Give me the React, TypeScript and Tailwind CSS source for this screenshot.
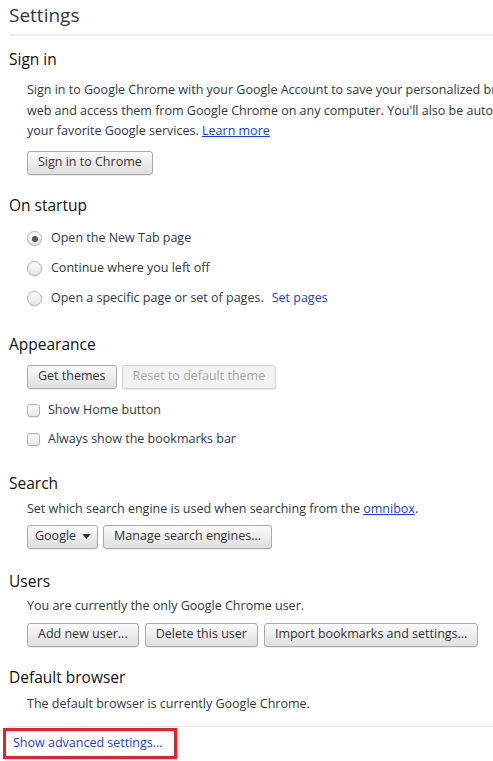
import React from 'react';

const font = { fontFamily: '"Open Sans", "DejaVu Sans", sans-serif' };

function Btn({ children, disabled, className }: { children: React.ReactNode; disabled?: boolean; className?: string }) {
  return (
    <button
      className={
        'h-[24px] px-[10px] rounded-[3px] border text-[12.5px] leading-none shadow-[0_1px_0_rgba(0,0,0,0.08)] ' +
        (disabled
          ? 'border-[#d4d4d4] bg-[#f2f2f2] text-[#a8a8a8]'
          : 'border-[#aaaaaa] bg-gradient-to-b from-[#fbfbfb] to-[#dedede] text-[#333]') +
        ' ' + (className || '')
      }
    >
      {children}
    </button>
  );
}

function Heading({ children, className }: { children: React.ReactNode; className?: string }) {
  return <h3 className={'text-[15.5px] leading-[20px] text-[#111] ' + (className || '')}>{children}</h3>;
}

function Radio({ checked, children }: { checked?: boolean; children: React.ReactNode }) {
  return (
    <div className="h-[30px] flex items-center">
      <span className="w-[15px] h-[15px] rounded-full border border-[#b4b4b4] bg-gradient-to-b from-[#fdfdfd] to-[#e4e4e4] flex items-center justify-center shadow-[0_1px_1px_rgba(0,0,0,0.1)]">
        {checked && <span className="w-[6px] h-[6px] rounded-full bg-[#555]" />}
      </span>
      <span className="ml-[9px] flex items-center gap-[8px]">{children}</span>
    </div>
  );
}

function Check({ children }: { children: React.ReactNode }) {
  return (
    <div className="h-[29px] flex items-center">
      <span className="w-[13px] h-[13px] rounded-[3px] border border-[#b4b4b4] bg-gradient-to-b from-[#fdfdfd] to-[#e6e6e6] shadow-[0_1px_1px_rgba(0,0,0,0.08)]" />
      <span className="ml-[8px]">{children}</span>
    </div>
  );
}

export default function App() {
  return (
    <div className="w-[493px] h-[761px] overflow-hidden bg-white text-[12.5px] text-[#303942]" style={font}>
      <div className="pl-[9px]">
        {/* title */}
        <div className="h-[36px] border-b-2 border-[#eeeeee] flex items-start">
          <h1 className="text-[19px] leading-[26px] mt-[2px] text-[#303942]">Settings</h1>
        </div>

        <Heading className="mt-[13px]">Sign in</Heading>
        <div className="pl-[18px]">
          <div className="mt-[11px] leading-[20.5px] whitespace-nowrap">
            <div>Sign in to Google Chrome with your Google Account to save your personalized browser features to the</div>
            <div>web and access them from Google Chrome on any computer. You'll also be automatically signed in to</div>
            <div>
              your favorite Google services. <a className="text-[#1a3fd6] underline">Learn more</a>
            </div>
          </div>
          <Btn className="mt-[9px]">Sign in to Chrome</Btn>
        </div>

        <Heading className="mt-[20px]">On startup</Heading>
        <div className="pl-[18px] mt-[9px]">
          <Radio checked>Open the New Tab page</Radio>
          <Radio>Continue where you left off</Radio>
          <Radio>
            <span>Open a specific page or set of pages.</span>
            <a className="text-[#1a3fd6]">Set pages</a>
          </Radio>
        </div>

        <Heading className="mt-[20px]">Appearance</Heading>
        <div className="pl-[18px]">
          <div className="mt-[11px] flex gap-[5px]">
            <Btn>Get themes</Btn>
            <Btn disabled>Reset to default theme</Btn>
          </div>
          <div className="mt-[7px]">
            <Check>Show Home button</Check>
            <Check>Always show the bookmarks bar</Check>
          </div>
        </div>

        <Heading className="mt-[19px]">Search</Heading>
        <div className="pl-[18px]">
          <div className="mt-[6px] leading-[20px]">
            Set which search engine is used when searching from the <a className="text-[#1a3fd6] underline">omnibox</a>.
          </div>
          <div className="mt-[6px] flex gap-[5px]">
            <Btn className="flex items-center gap-[6px] pl-[7px] pr-[6px]">
              <span>Google</span>
              <svg width="9" height="5" viewBox="0 0 10 6">
                <path d="M0 0 L10 0 L5 6 Z" fill="#333" />
              </svg>
            </Btn>
            <Btn>Manage search engines...</Btn>
          </div>
        </div>

        <Heading className="mt-[22px]">Users</Heading>
        <div className="pl-[18px]">
          <div className="mt-[5px] leading-[20px]">You are currently the only Google Chrome user.</div>
          <div className="mt-[7px] flex gap-[6px]">
            <Btn>Add new user...</Btn>
            <Btn>Delete this user</Btn>
            <Btn>Import bookmarks and settings...</Btn>
          </div>
        </div>

        <Heading className="mt-[20px]">Default browser</Heading>
        <div className="pl-[18px]">
          <div className="mt-[7px] leading-[20px]">The default browser is currently Google Chrome.</div>
        </div>

        <div className="mt-[12px] border-t border-[#e6e6e6]" />
      </div>

      <div className="ml-[3px] mt-[1px] w-[174px] h-[31px] border-[3px] border-[#e8202a] flex items-center pl-[7px]">
        <a className="text-[#1a3fd6] text-[12.5px]">Show advanced settings...</a>
      </div>
    </div>
  );
}
